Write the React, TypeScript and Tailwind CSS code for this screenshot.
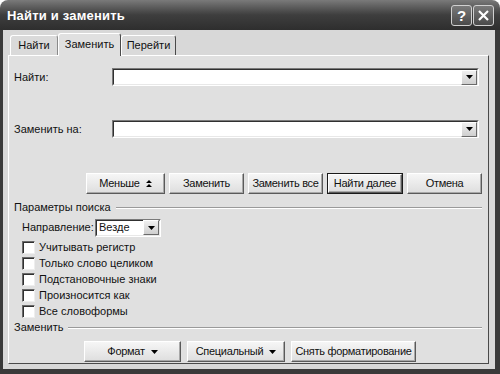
import React from "react";

function Arrow() {
  return (
    <svg width="7" height="4" viewBox="0 0 7 4">
      <path d="M0 0H7L3.5 4Z" fill="#000" />
    </svg>
  );
}

function DropBtn() {
  return (
    <div className="w-[16px] h-[15px] flex items-center justify-center bg-linear-to-b from-[#f0f0f0] to-[#cfcfcf] border border-t-white border-l-white border-r-[#6a6a6a] border-b-[#6a6a6a]">
      <Arrow />
    </div>
  );
}

function Combo({ w, text }: { w: string; text?: string }) {
  return (
    <div className={`${w} h-[18px] border border-t-[#7a7a7a] border-l-[#7a7a7a] border-r-white border-b-white`}>
      <div className="w-full h-full border border-t-[#303030] border-l-[#303030] border-r-[#e8e8e8] border-b-[#e8e8e8] bg-white flex items-center justify-between pl-[2px]">
        <span className="leading-none">{text}</span>
        <DropBtn />
      </div>
    </div>
  );
}

function Btn({ w, children, def }: { w: string; children: React.ReactNode; def?: boolean }) {
  return (
    <div className={`${w} h-[21px] ${def ? "border border-[#1a1a1a]" : ""}`}>
      <div className="w-full h-full flex items-center justify-center tracking-[-0.3px] text-[#111] bg-linear-to-b from-[#f6f6f6] to-[#dedede] border border-t-white border-l-white border-r-[#5a5a5a] border-b-[#5a5a5a] shadow-[inset_-1px_-1px_0_#a8a8a8]">
        {children}
      </div>
    </div>
  );
}

function Check({ label }: { label: string }) {
  return (
    <div className="h-[16px] flex items-center pl-[8px]">
      <div className="w-[13px] h-[13px] bg-white border border-t-[#6a6a6a] border-l-[#6a6a6a] border-r-[#eeeeee] border-b-[#eeeeee] shadow-[inset_1px_1px_0_#303030]" />
      <span className="ml-[4px]">{label}</span>
    </div>
  );
}

function Section({ label }: { label: string }) {
  return (
    <div className="h-[13px] flex items-center">
      <span>{label}</span>
      <div className="flex-1 ml-[5px] border-t border-[#9a9a9a] border-b border-b-white h-0" />
    </div>
  );
}

export default function App() {
  return (
    <div className="w-[500px] h-[374px] flex flex-col bg-white text-[11px] text-[#111] font-['Liberation_Sans',Arial,sans-serif] leading-none">
      <div className="h-[30px] rounded-t-[8px] bg-linear-to-b from-[#7a7a7a] via-[#3e3e3e] to-[#2e2e2e] flex items-center pl-[7px] pr-[6px] pt-[1px]">
        <span className="text-white font-bold text-[13px] tracking-[0.2px]">Найти и заменить</span>
        <div className="ml-auto flex gap-[1px]">
          <div className="w-[21px] h-[21px] rounded-[3px] border border-[#d0d0d0] bg-linear-to-b from-[#7a7a7a] to-[#4a4a4a] flex items-center justify-center text-white font-bold text-[15px]">
            ?
          </div>
          <div className="w-[21px] h-[21px] rounded-[3px] border border-[#d0d0d0] bg-linear-to-b from-[#7a7a7a] to-[#4a4a4a] flex items-center justify-center">
            <svg width="11" height="11" viewBox="0 0 11 11">
              <path d="M1 1L10 10M10 1L1 10" stroke="#fff" strokeWidth="2.2" />
            </svg>
          </div>
        </div>
      </div>
      <div className="flex-1 bg-[#d8d8d8] border-l-[3px] border-r-[5px] border-b-[5px] border-[#3a3a3a] pl-[5px] pr-[6px] pt-[3px] flex flex-col">
        <div className="ml-[2px] flex items-end h-[22px] relative z-10">
          <div className="w-[48px] h-[20px] border-t border-l border-white border-r border-r-[#8a8a8a] rounded-t-[3px] flex items-center justify-center bg-[#dadada]">
            Найти
          </div>
          <div className="w-[63px] h-[23px] -mb-[1px] bg-[#e0e0e0] border-t border-l border-white border-r border-r-[#4a4a4a] rounded-t-[3px] flex items-center justify-center pb-[2px]">
            Заменить
          </div>
          <div className="w-[55px] h-[20px] border-t border-l border-white border-r border-r-[#4a4a4a] rounded-t-[3px] flex items-center justify-center bg-[#dadada]">
            Перейти
          </div>
        </div>
        <div className="h-[309px] bg-[#e0e0e0] border border-t-white border-l-white border-r-[#4a4a4a] border-b-[#4a4a4a] flex flex-col pl-[5px] pr-[6px]">
          <div className="mt-[12px] h-[18px] flex items-center">
            <span className="w-[98px]">Найти:</span>
            <Combo w="w-[367px]" />
          </div>
          <div className="mt-[34px] h-[18px] flex items-center">
            <span className="w-[98px]">Заменить на:</span>
            <Combo w="w-[367px]" />
          </div>
          <div className="mt-[35px] ml-[72px] flex gap-[4px]">
            <Btn w="w-[79px]">
              <span>Меньше</span>
              <svg width="6" height="7" viewBox="0 0 6 7" className="ml-[6px]">
                <path d="M0 3H6L3 0Z M0 7H6L3 4Z" fill="#000" />
              </svg>
            </Btn>
            <Btn w="w-[75px]">Заменить</Btn>
            <Btn w="w-[75px]">Заменить все</Btn>
            <Btn w="w-[76px]" def>Найти далее</Btn>
            <Btn w="w-[75px]">Отмена</Btn>
          </div>
          <div className="mt-[7px]">
            <Section label="Параметры поиска" />
          </div>
          <div className="mt-[4px] h-[19px] flex items-center pl-[8px]">
            <span className="w-[73px]">Направление:</span>
            <Combo w="w-[66px]" text="Везде" />
          </div>
          <div className="mt-[2px] flex flex-col">
            <Check label="Учитывать регистр" />
            <Check label="Только слово целиком" />
            <Check label="Подстановочные знаки" />
            <Check label="Произносится как" />
            <Check label="Все словоформы" />
          </div>
          <div className="mt-[2px]">
            <Section label="Заменить" />
          </div>
          <div className="mt-[7px] ml-[70px] flex gap-[6px]">
            <Btn w="w-[97px]">
              <span>Формат</span>
              <span className="ml-[6px]"><Arrow /></span>
            </Btn>
            <Btn w="w-[98px]">
              <span>Специальный</span>
              <span className="ml-[6px]"><Arrow /></span>
            </Btn>
            <Btn w="w-[125px]">Снять форматирование</Btn>
          </div>
        </div>
      </div>
    </div>
  );
}
